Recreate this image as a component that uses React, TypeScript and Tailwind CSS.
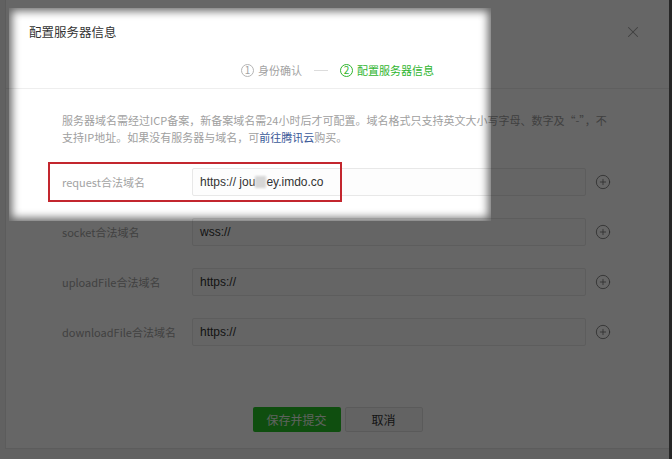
import { CirclePlus, X } from "lucide-react";

type Campo = {
  rotulo: string;
  valor: string;
};

const campos: Campo[] = [
  { rotulo: "request合法域名", valor: "" },
  { rotulo: "socket合法域名", valor: "wss://" },
  { rotulo: "uploadFile合法域名", valor: "https://" },
  { rotulo: "downloadFile合法域名", valor: "https://" },
];

function Passo({ n, texto, ativo }: { n: number; texto: string; ativo?: boolean }) {
  return (
    <div className={`flex items-center gap-[4px] ${ativo ? "text-[#2fb52f]" : "text-[#a3a3a3]"}`}>
      <span
        className={`flex h-[13px] w-[13px] items-center justify-center rounded-full border text-[10px] leading-none ${
          ativo ? "border-[#2fb52f]" : "border-[#b5b5b5]"
        }`}
      >
        {n}
      </span>
      <span className="text-[11px] leading-[20px]">{texto}</span>
    </div>
  );
}

export default function App() {
  return (
    <div className="relative flex h-[459px] w-[672px] overflow-hidden bg-[#f3f3f3] font-['Noto_Sans_CJK_SC',sans-serif]">
      <div className="relative ml-[5px] flex h-[449px] w-[664px] flex-col border-b border-l border-[#e6e6e6] bg-white">
        {/* cabeçalho */}
        <div className="flex items-center justify-between pl-[23px] pr-[27px] pt-[22px]">
          <h3 className="text-[12.5px] leading-[20px] text-[#333]">配置服务器信息</h3>
          <X size={18} strokeWidth={1.4} className="text-[#a0a0a0]" />
        </div>

        {/* passos */}
        <div className="mt-[18px] border-b border-[#eeeeee] pb-[8px]">
          <div className="flex h-[20px] items-center justify-center gap-[12px]">
            <Passo n={1} texto="身份确认" />
            <span className="h-px w-[14px] bg-[#dcdcdc]" />
            <Passo n={2} texto="配置服务器信息" ativo />
          </div>
        </div>

        {/* aviso */}
        <p className="mt-[23px] pl-[56px] text-[11px] leading-[17px] text-[#a0a0a0]">
          <span className="block">
            服务器域名需经过ICP备案，新备案域名需24小时后才可配置。域名格式只支持英文大小写字母、数字及“-”，不
          </span>
          <span className="block">
            支持IP地址。如果没有服务器与域名，可<span className="text-[#3b5998]">前往腾讯云</span>购买。
          </span>
        </p>

        {/* campos */}
        <div className="mt-[22px] flex flex-col gap-[22px] pl-[56px]">
          {campos.map((campo, i) => (
            <div key={campo.rotulo} className="flex h-[28px] items-center">
              <span className="w-[130px] text-[11px] text-[#a3a3a3]">{campo.rotulo}</span>
              <div className="flex h-[28px] w-[394px] items-center rounded-[2px] border border-[#e8e8e8] bg-[#fdfdfd] pl-[7px] font-['Liberation_Sans',sans-serif] text-[12px] text-[#333]">
                {i === 0 ? (
                  <span className="flex items-center">
                    https://&nbsp;jou
                    <span className="inline-block h-[12px] w-[11px] bg-[#d6d6d6] blur-[1px]" />
                    ey.imdo.co
                  </span>
                ) : (
                  campo.valor
                )}
              </div>
              <CirclePlus size={16} strokeWidth={1.2} className="ml-[9px] text-[#6e6e6e]" />
            </div>
          ))}
        </div>

        {/* rodapé */}
        <div className="mt-[61px] flex justify-center gap-[4px]">
          <button className="h-[25px] w-[88px] rounded-[2px] bg-[#26c226] text-[12px] text-[#e8f5e8]">
            保存并提交
          </button>
          <button className="h-[25px] w-[78px] rounded-[2px] border border-[#e2e2e2] bg-[#f7f7f7] text-[12px] text-[#333]">
            取消
          </button>
        </div>

        {/* destaque vermelho */}
        <div className="absolute left-[42px] top-[162px] h-[40px] w-[294px] border-2 border-[#c3262e]" />
      </div>
      <div className="ml-auto w-[3px] bg-[#606060]" />

      {/* foco (spotlight): painéis escuros + borda suave */}
      <div className="pointer-events-none absolute inset-x-0 top-0 h-[8px] bg-black/60" />
      <div className="pointer-events-none absolute inset-x-0 bottom-0 top-[221px] bg-black/60" />
      <div className="pointer-events-none absolute left-0 top-[8px] h-[213px] w-[9px] bg-black/60" />
      <div className="pointer-events-none absolute left-[491px] right-0 top-[8px] h-[213px] bg-black/60" />
      <div className="pointer-events-none absolute left-[9px] top-[8px] h-[213px] w-[482px] shadow-[inset_0_0_9px_3px_rgba(0,0,0,0.6)]" />
    </div>
  );
}
